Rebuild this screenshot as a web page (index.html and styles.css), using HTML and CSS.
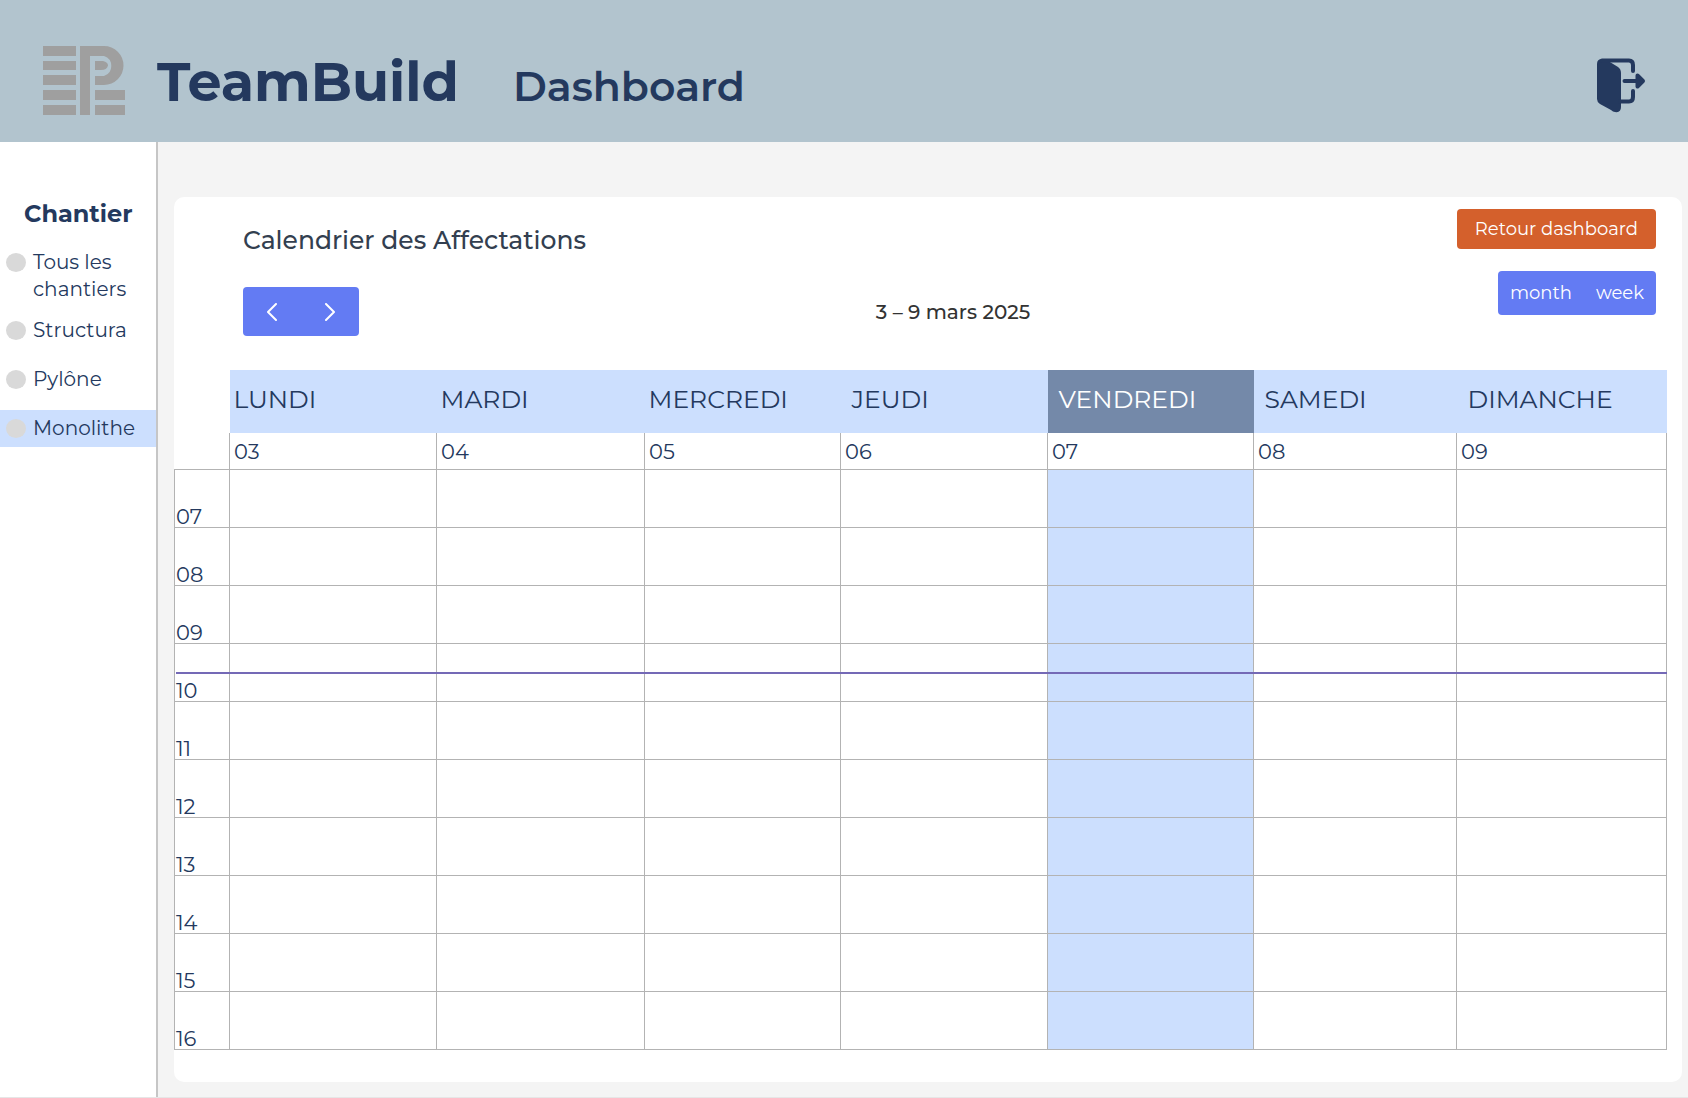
FILE: index.html
```html
<!DOCTYPE html>
<html lang="fr">
<head>
<meta charset="utf-8">
<meta name="viewport" content="width=device-width, initial-scale=1">
<title>TeamBuild – Dashboard</title>
<link rel="stylesheet" href="styles.css">
</head>
<body>
<header class="topbar">
  <svg class="logo" viewBox="0 0 82 69" width="82" height="69" aria-hidden="true">
    <path d="M0 0h33v10H0zM0 15h33v9H0zM0 29h33v10H0zM0 44h33v10H0zM0 59h33v10H0zM52 44h30v10H52zM52 59h30v10H52z"/>
    <path d="M37 0H61A19.500 19.500 0 0 1 61 39H52V30H61A10.500 10.500 0 0 0 61 10H47V69H37Z"/>
    <path d="M52 15H60Q65 16 65 19.500Q64 24 58 24H52Z"/>
  </svg>
  <span class="brand">TeamBuild</span>
  <h1 class="page-title">Dashboard</h1>
  <button class="logout" type="button" aria-label="Se déconnecter">
    <svg viewBox="0 0 50 56" width="50" height="56" aria-hidden="true">
      <path class="door" d="M0 6Q0 1 5 1H8L21 9Q24 11 24 15V49Q24 55 18 54Q16 54 14 52L3 46Q0 44 0 41Z"/>
      <path class="frame" d="M5 2.500H32Q36 2.500 36 7V13M36 33V39Q36 43.500 32 43.500H23M27.500 23H45"/>
      <path class="head" d="M40.500 17.500L46 23L40.500 28.500Z"/>
    </svg>
  </button>
</header>
<div class="layout">
  <nav class="sidebar" aria-labelledby="sites">
    <h2 class="sidebar-title" id="sites">Chantier</h2>
    <ul class="sites">
      <li><a class="site site-all" href="#tous"><span class="dot"></span><span>Tous les chantiers</span></a></li>
      <li><a class="site" href="#structura"><span class="dot"></span><span>Structura</span></a></li>
      <li><a class="site" href="#pylone"><span class="dot"></span><span>Pylône</span></a></li>
      <li><a class="site site-active" href="#monolithe" aria-current="true"><span class="dot"></span><span>Monolithe</span></a></li>
    </ul>
  </nav>
  <main class="main">
    <section class="card">
      <div class="toolbar">
        <div class="toolbar-left">
          <h2 class="card-title">Calendrier des Affectations</h2>
          <div class="group">
            <button class="arrow" type="button" aria-label="Semaine précédente"><svg viewBox="0 0 10 18" width="10" height="18"><path d="M9 1L1 9L9 17"/></svg></button>
            <button class="arrow" type="button" aria-label="Semaine suivante"><svg viewBox="0 0 10 18" width="10" height="18"><path d="M1 1L9 9L1 17"/></svg></button>
          </div>
        </div>
        <p class="period">3 – 9 mars 2025</p>
        <div class="toolbar-right">
          <button class="back" type="button">Retour dashboard</button>
          <div class="group">
            <button class="view" type="button">month</button>
            <button class="view" type="button">week</button>
          </div>
        </div>
      </div>
      <div class="calendar">
        <table class="week">
          <colgroup><col class="c-hour"><col class="c-mon"><col class="c-tue"><col class="c-wed"><col class="c-thu"><col class="c-fri"><col class="c-sat"><col class="c-sun"></colgroup>
          <thead>
            <tr class="days"><td></td><th scope="col">LUNDI</th><th scope="col">MARDI</th><th scope="col">MERCREDI</th><th scope="col" class="inset">JEUDI</th><th scope="col" class="inset today">VENDREDI</th><th scope="col" class="inset">SAMEDI</th><th scope="col" class="inset">DIMANCHE</th></tr>
            <tr class="dates"><td></td><td>03</td><td>04</td><td>05</td><td>06</td><td>07</td><td>08</td><td>09</td></tr>
          </thead>
          <tbody>
            <tr><th scope="row">07</th><td></td><td></td><td></td><td></td><td class="today"></td><td></td><td></td></tr>
            <tr><th scope="row">08</th><td></td><td></td><td></td><td></td><td class="today"></td><td></td><td></td></tr>
            <tr><th scope="row">09</th><td></td><td></td><td></td><td></td><td class="today"></td><td></td><td></td></tr>
            <tr><th scope="row">10</th><td></td><td></td><td></td><td></td><td class="today"></td><td></td><td></td></tr>
            <tr><th scope="row">11</th><td></td><td></td><td></td><td></td><td class="today"></td><td></td><td></td></tr>
            <tr><th scope="row">12</th><td></td><td></td><td></td><td></td><td class="today"></td><td></td><td></td></tr>
            <tr><th scope="row">13</th><td></td><td></td><td></td><td></td><td class="today"></td><td></td><td></td></tr>
            <tr><th scope="row">14</th><td></td><td></td><td></td><td></td><td class="today"></td><td></td><td></td></tr>
            <tr><th scope="row">15</th><td></td><td></td><td></td><td></td><td class="today"></td><td></td><td></td></tr>
            <tr><th scope="row">16</th><td></td><td></td><td></td><td></td><td class="today"></td><td></td><td></td></tr>
          </tbody>
        </table>
        <div class="now"></div>
      </div>
    </section>
  </main>
</div>
</body>
</html>
```
FILE: styles.css
```css
:root {
  --navy: #24395e;
  --sky: #ccdffe;
  --indigo: #637bf3;
  --line: #b3b3b3;
}

* {
  box-sizing: border-box;
}

body {
  margin: 0;
  min-height: 100vh;
  display: flex;
  flex-direction: column;
  font-family: Montserrat, Inter, "Liberation Sans", sans-serif;
  color: var(--navy);
  background: #f4f4f4;
}

h1, h2, p, ul {
  margin: 0;
  padding: 0;
}

button {
  border: 0;
  padding: 0;
  font: inherit;
  color: #fff;
  cursor: pointer;
}

/* Top bar */
.topbar {
  display: flex;
  align-items: center;
  min-height: 142px;
  padding: 19px 41px 0 43px;
  background: #b2c4ce;
}

.logo {
  fill: #9f9f9f;
}

.brand {
  margin-left: 32px;
  padding-top: 2px;
  font-size: 54px;
  line-height: 64px;
  font-weight: 700;
}

.page-title {
  margin-left: 54px;
  padding-top: 10px;
  font-size: 41px;
  line-height: 52px;
  font-weight: 600;
}

.logout {
  display: flex;
  margin-left: auto;
  padding-top: 10px;
  background: none;
}

.door, .head {
  fill: var(--navy);
}

.frame, .head {
  stroke: var(--navy);
  stroke-width: 4;
  stroke-linecap: round;
  stroke-linejoin: round;
}

.frame {
  fill: none;
}

/* Sidebar */
.layout {
  flex: 1;
  display: flex;
  border-bottom: 1px solid #e6e6e6;
}

.sidebar {
  width: 158px;
  flex: none;
  padding-top: 54px;
  background: #fff;
  border-right: 2px solid #c6c6c6;
}

.sidebar-title {
  padding-left: 24px;
  font-size: 24px;
  line-height: 36px;
  font-weight: 700;
}

.sites {
  margin-top: 12px;
  list-style: none;
}

.site {
  display: flex;
  gap: 7px;
  margin-bottom: 12px;
  padding: 5px 6px;
  font-size: 20px;
  line-height: 27px;
  font-weight: 400;
  color: inherit;
  text-decoration: none;
}

.site-all {
  margin-bottom: 9px;
  padding-bottom: 0;
}

.site-active {
  background: var(--sky);
}

.dot {
  flex: none;
  width: 20px;
  height: 19px;
  margin-top: 4px;
  border-radius: 50%;
  background: #d9d9d9;
}

/* Card */
.main {
  flex: 1;
  display: flex;
  padding: 55px 7px 15px 16px;
}

.card {
  flex: 1;
  padding: 12px 15px 30px 0;
  border-radius: 10px;
  background: #fff;
}

.toolbar {
  display: grid;
  grid-template-columns: 1fr auto 1fr;
  align-items: start;
  padding: 0 11px 0 69px;
}

.card-title {
  padding-top: 15px;
  font-size: 25px;
  line-height: 32px;
  font-weight: 500;
  color: #333f50;
}

.group {
  display: inline-flex;
  overflow: hidden;
  border-radius: 4px;
  background: var(--indigo);
}

.toolbar-left .group {
  margin-top: 31px;
}

.arrow {
  display: grid;
  place-items: center;
  width: 58px;
  height: 49px;
  background: none;
}

.arrow path {
  fill: none;
  stroke: #fff;
  stroke-width: 2;
  stroke-linecap: round;
  stroke-linejoin: round;
}

.period {
  padding: 90px 0 0 7px;
  font-size: 20px;
  line-height: 26px;
  font-weight: 500;
  color: #333;
}

.toolbar-right {
  display: flex;
  flex-direction: column;
  align-items: flex-end;
  gap: 22px;
}

.back, .view {
  font-size: 18px;
  font-weight: 400;
}

.back {
  height: 40px;
  padding: 0 18px;
  border-radius: 4px;
  background: #d4602c;
}

.view {
  height: 44px;
  padding: 0 12px;
  background: none;
}

/* Weekly grid */
.calendar {
  position: relative;
  margin-top: 34px;
}

.week {
  width: 100%;
  table-layout: fixed;
  border-collapse: collapse;
  font-size: 21px;
  line-height: 20px;
  font-weight: 400;
}

.c-hour { width: 55px; }
.c-mon, .c-thu { width: 207px; }
.c-tue { width: 208px; }
.c-wed { width: 196px; }
.c-fri { width: 206px; }
.c-sat { width: 203px; }
.c-sun { width: 210px; }

.week th, .week td {
  padding: 0 4px;
  text-align: left;
  font-weight: inherit;
}

.days {
  height: 63px;
  font-size: 25px;
}

.week .days th {
  padding: 0 4px 6px;
  background: var(--sky);
}

.week .days .inset {
  padding-left: 11px;
}

.week .days .today {
  color: #fff;
  background: #7489a9;
}

.dates {
  height: 36px;
}

.week .dates td {
  padding-top: 3px;
}

.dates td + td {
  border-left: 1px solid var(--line);
  border-right: 1px solid var(--line);
}

.week tbody tr {
  height: 58px;
}

.week tbody th, .week tbody td {
  border: 1px solid var(--line);
}

.week tbody th {
  padding: 0 1px;
  vertical-align: bottom;
}

.week tbody .today {
  background: var(--sky);
}

.now {
  position: absolute;
  top: 302px;
  left: 2px;
  right: 0;
  height: 2px;
  background: #7469b6;
}
```
